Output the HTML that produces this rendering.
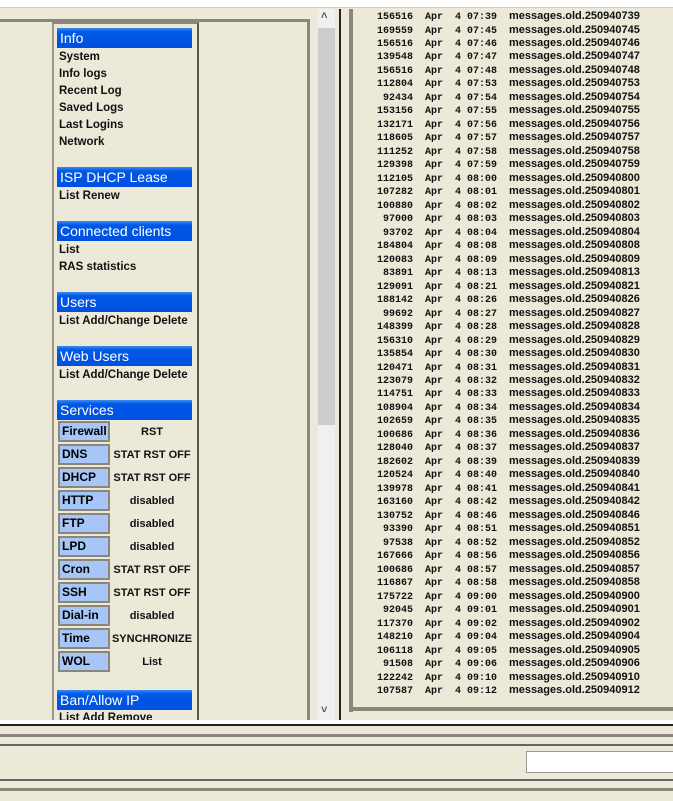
<!DOCTYPE html>
<html><head><style>
*{margin:0;padding:0;box-sizing:border-box}
body{width:673px;height:801px;background:#ece9d8;position:relative;overflow:hidden;font-family:"Liberation Sans",sans-serif;font-weight:bold;font-size:11px;color:#111}
.a{position:absolute}
.h{position:absolute;left:57px;width:135px;height:20px;background:linear-gradient(#3a8cf0,#0058e6 20%,#0050e0);color:#fff;font-weight:normal;font-size:14px;line-height:20px;padding-left:3px}
.i{position:absolute;left:59px;font-size:11.5px}
.b{position:absolute;left:58px;width:52px;height:21px;background:#a6c6f7;border:2px solid #8a877a;font-size:12px;font-weight:bold;line-height:17px;padding-left:2px;color:#000}
.s{position:absolute;left:111px;width:82px;text-align:center;font-size:11px}
.r{position:absolute;left:355px;white-space:pre;height:14px;line-height:14px}
.r .n{display:inline-block;width:58px;text-align:right;font-family:"Liberation Mono",monospace;font-size:10px;font-weight:bold}
.r .d{display:inline-block;width:96px;font-family:"Liberation Mono",monospace;font-size:10px;font-weight:bold;padding-left:12px}
.r .m{font-size:11px}
</style></head><body>
<div class="a" style="left:0;top:0;width:673px;height:8px;background:#fff;border-bottom:1px solid #ccc"></div>
<div class="a" style="left:0;top:19px;width:310px;height:3px;background:#8a877a"></div>
<div class="a" style="left:307px;top:19px;width:3px;height:702px;background:#8a877a"></div>
<div class="a" style="left:318px;top:9px;width:17px;height:712px;background:#f0f0f0"></div>
<div class="a" style="left:318px;top:28px;width:17px;height:397px;background:#cdcdcd"></div>
<div class="a" style="left:321px;top:10px;font-size:11px;color:#555">&#708;</div>
<div class="a" style="left:321px;top:704px;font-size:11px;color:#555">&#709;</div>
<div class="a" style="left:339px;top:9px;width:2px;height:712px;background:#222"></div>
<div class="a" style="left:349px;top:9px;width:4px;height:703px;background:#8a877a"></div>
<div class="a" style="left:349px;top:707px;width:324px;height:4px;background:#8a877a"></div>
<div class="a" style="left:52px;top:22px;width:147px;height:699px;border-left:2px solid #9a978a;border-right:2px solid #555;border-top:2px solid #8a877a"></div>
<div class="h" style="top:28px">Info</div>
<div class="i" style="top:51px">System</div>
<div class="i" style="top:68px">Info logs</div>
<div class="i" style="top:85px">Recent Log</div>
<div class="i" style="top:102px">Saved Logs</div>
<div class="i" style="top:119px">Last Logins</div>
<div class="i" style="top:136px">Network</div>
<div class="h" style="top:167px">ISP DHCP Lease</div>
<div class="i" style="top:190px">List Renew</div>
<div class="h" style="top:221px">Connected clients</div>
<div class="i" style="top:244px">List</div>
<div class="i" style="top:261px">RAS statistics</div>
<div class="h" style="top:292px">Users</div>
<div class="i" style="top:315px">List Add/Change Delete</div>
<div class="h" style="top:346px">Web Users</div>
<div class="i" style="top:369px">List Add/Change Delete</div>
<div class="h" style="top:400px">Services</div>
<div class="b" style="top:421px">Firewall</div><div class="s" style="top:426px">RST</div>
<div class="b" style="top:444px">DNS</div><div class="s" style="top:449px">STAT RST OFF</div>
<div class="b" style="top:467px">DHCP</div><div class="s" style="top:472px">STAT RST OFF</div>
<div class="b" style="top:490px">HTTP</div><div class="s" style="top:495px">disabled</div>
<div class="b" style="top:513px">FTP</div><div class="s" style="top:518px">disabled</div>
<div class="b" style="top:536px">LPD</div><div class="s" style="top:541px">disabled</div>
<div class="b" style="top:559px">Cron</div><div class="s" style="top:564px">STAT RST OFF</div>
<div class="b" style="top:582px">SSH</div><div class="s" style="top:587px">STAT RST OFF</div>
<div class="b" style="top:605px">Dial-in</div><div class="s" style="top:610px">disabled</div>
<div class="b" style="top:628px">Time</div><div class="s" style="top:633px">SYNCHRONIZE</div>
<div class="b" style="top:651px">WOL</div><div class="s" style="top:656px">List</div>
<div class="h" style="top:690px">Ban/Allow IP</div>
<div class="i" style="top:712px">List Add Remove</div>
<div id="rows"></div>
<div class="a" style="left:0;top:720px;width:673px;height:81px;background:#ece9d8"></div>
<div class="a" style="left:0;top:720px;width:673px;height:4px;background:#fff"></div>
<div class="a" style="left:0;top:724px;width:673px;height:2px;background:#222"></div>
<div class="a" style="left:0;top:734px;width:673px;height:3px;background:#8a877a"></div>
<div class="a" style="left:0;top:744px;width:673px;height:2px;background:#666"></div>
<div class="a" style="left:526px;top:751px;width:150px;height:22px;background:#fff;border:1px solid #999"></div>
<div class="a" style="left:0;top:779px;width:673px;height:2px;background:#666"></div>
<div class="a" style="left:0;top:788px;width:673px;height:3px;background:#8a877a"></div>
<script>
var d="156516 0739,169559 0745,156516 0746,139548 0747,156516 0748,112804 0753,92434 0754,153156 0755,132171 0756,118605 0757,111252 0758,129398 0759,112105 0800,107282 0801,100880 0802,97000 0803,93702 0804,184804 0808,120083 0809,83891 0813,129091 0821,188142 0826,99692 0827,148399 0828,156310 0829,135854 0830,120471 0831,123079 0832,114751 0833,108904 0834,102659 0835,100686 0836,128040 0837,182602 0839,120524 0840,139978 0841,163160 0842,130752 0846,93390 0851,97538 0852,167666 0856,100686 0857,116867 0858,175722 0900,92045 0901,117370 0902,148210 0904,106118 0905,91508 0906,122242 0910,107587 0912".split(",");
var h="";d.forEach(function(e,k){var p=e.split(" "),t=p[1];h+='<div class="r" style="top:'+(9+k*13.48).toFixed(1)+'px"><span class="n">'+p[0]+'</span><span class="d">Apr  4 '+t.slice(0,2)+':'+t.slice(2)+'</span><span class="m">messages.old.25094'+t+'</span></div>';});
document.getElementById("rows").outerHTML=h;
</script>
</body></html>
